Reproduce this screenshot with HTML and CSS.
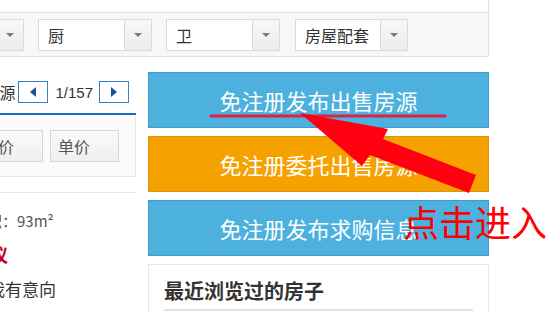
FILE: index.html
```html
<!DOCTYPE html>
<html lang="zh-CN">
<head>
    <meta charset="UTF-8">
    <meta name="viewport" content="width=device-width, initial-scale=1.0">
    <title>出售房源</title>
    <link rel="stylesheet" href="styles.css">
</head>
<body>
    <div class="page">
        <div class="filter-wrap">
            <div class="filter-bar">
                <div class="select select-first">
                    <span class="select-text">朝向</span>
                    <span class="select-btn"><i class="caret"></i></span>
                </div>
                <div class="select">
                    <span class="select-text">厨</span>
                    <span class="select-btn"><i class="caret"></i></span>
                </div>
                <div class="select">
                    <span class="select-text">卫</span>
                    <span class="select-btn"><i class="caret"></i></span>
                </div>
                <div class="select select-last">
                    <span class="select-text">房屋配套</span>
                    <span class="select-btn"><i class="caret"></i></span>
                </div>
            </div>
        </div>

        <div class="main">
            <div class="side">
                <div class="pager">
                    <span class="pager-label">出售房源</span>
                    <span class="pager-btn"><i class="tri tri-left"></i></span>
                    <span class="pager-count">1/157</span>
                    <span class="pager-btn"><i class="tri tri-right"></i></span>
                </div>

                <div class="sort">
                    <span class="sort-btn">总价</span>
                    <span class="sort-btn">单价</span>
                </div>

                <div class="listing">
                    <p class="area">面积：93m&sup2;</p>
                    <p class="price">面议</p>
                    <p class="intent">我有意向</p>
                </div>
            </div>

            <div class="actions">
                <a class="action action-blue" href="#">免注册发布出售房源</a>
                <a class="action action-orange" href="#">免注册委托出售房源</a>
                <a class="action action-blue" href="#">免注册发布求购信息</a>

                <div class="recent">
                    <h3 class="recent-title">最近浏览过的房子</h3>
                </div>
            </div>
        </div>

        <!-- hand-drawn annotation on top of the page -->
        <svg class="annot" width="550" height="312" viewBox="0 0 550 312">
            <line x1="211" y1="116" x2="445" y2="116" stroke="#dc2440" stroke-width="3" stroke-linecap="round"/>
            <polygon points="300,113 388,129 383,139 476,175 469,193 370,155 362,166" fill="#ff0010"/>
        </svg>
        <span class="annot-text">点击进入</span>
    </div>
</body>
</html>
```

FILE: styles.css
```css
body {
    margin: 0;
    font-family: "Noto Sans CJK SC", "Liberation Sans", sans-serif;
    color: #333;
    background: #fff;
}

.page {
    position: relative;
    width: 550px;
    height: 312px;
    overflow: hidden;
}

/* filter bar */
.filter-wrap {
    box-sizing: border-box;
    width: 489px;
    padding-top: 12px;
    border-right: 1px solid #e2e2e2;
}

.filter-bar {
    display: flex;
    gap: 14px;
    height: 45px;
    padding-top: 6px;
    box-sizing: border-box;
    background: #f7f7f7;
    border-top: 1px solid #e2e2e2;
    border-bottom: 1px solid #e2e2e2;
}

.select {
    box-sizing: border-box;
    display: flex;
    flex-shrink: 0;
    width: 114px;
    height: 32px;
    background: #fff;
    border: 1px solid #dadada;
}

.select-first {
    margin-left: -90px;
}

.select-last {
    width: 113px;
    margin-left: 1px;
}

.select-text {
    flex: 1;
    padding-left: 9px;
    font-size: 16px;
    line-height: 30px;
    color: #333;
}

.select-btn {
    display: flex;
    align-items: center;
    justify-content: center;
    width: 26px;
    border-left: 1px solid #dadada;
    background: linear-gradient(#f8f8f8, #ececec);
}

.caret {
    width: 0;
    height: 0;
    border-left: 4px solid transparent;
    border-right: 4px solid transparent;
    border-top: 4px solid #777;
}

/* main area */
.main {
    display: flex;
    gap: 12px;
}

.side {
    width: 136px;
    flex-shrink: 0;
    overflow: hidden;
}

.pager {
    display: flex;
    justify-content: flex-end;
    align-items: center;
    height: 22px;
    padding: 24px 7px 10px 0;
    border-bottom: 2px solid #1a6ec2;
    white-space: nowrap;
}

.pager > * {
    flex-shrink: 0;
}

.pager-label {
    font-size: 16px;
    margin-right: 3px;
}

.pager-btn {
    box-sizing: border-box;
    display: flex;
    align-items: center;
    justify-content: center;
    width: 30px;
    height: 22px;
    background: #fff;
    border: 1px solid #3a7fc6;
}

.pager-count {
    font-family: "Liberation Sans", sans-serif;
    font-size: 15px;
    margin: 0 6px 0 7px;
}

.tri {
    width: 0;
    height: 0;
    border-top: 5px solid transparent;
    border-bottom: 5px solid transparent;
}

.tri-left {
    border-right: 6px solid #1c4f9c;
}

.tri-right {
    border-left: 6px solid #1c4f9c;
}

.sort {
    display: flex;
    justify-content: flex-end;
    gap: 7px;
    height: 46px;
    padding: 15px 16px 0 0;
    background: #fbfbfb;
    border-right: 1px solid #e8e8e8;
    border-bottom: 1px solid #e8e8e8;
}

.sort-btn {
    box-sizing: border-box;
    width: 69px;
    height: 32px;
    flex-shrink: 0;
    padding-left: 7px;
    font-size: 16px;
    line-height: 30px;
    color: #555;
    background: linear-gradient(#fafafa, #efefef);
    border: 1px solid #d6d6d6;
}

.listing {
    margin-top: 15px;
    border-top: 1px solid #e8e8e8;
}

.listing p {
    margin: 0;
    white-space: nowrap;
}

.listing .area {
    margin: 18px 0 0 -28px;
    font-size: 15px;
    line-height: 20px;
    color: #555;
}

.listing .price {
    margin: 11px 0 0 -28px;
    font-size: 18px;
    line-height: 24px;
    font-weight: bold;
    color: #c8001e;
}

.listing .intent {
    margin: 11px 0 0 -12px;
    font-size: 17px;
    line-height: 24px;
    color: #333;
}

/* action buttons */
.actions {
    display: flex;
    flex-direction: column;
    gap: 8px;
    width: 341px;
    padding-top: 15px;
}

.action {
    box-sizing: border-box;
    display: block;
    height: 56px;
    font-size: 22px;
    line-height: 54px;
    text-align: center;
    text-decoration: none;
    color: #fff;
}

.action-blue {
    background: #4cb1de;
    border: 1px solid #3d9ccb;
}

.action-orange {
    background: #f5a200;
    border: 1px solid #dc9410;
}

.recent {
    height: 60px;
    border: 1px solid #dfe7ef;
}

.recent-title {
    margin: 0 15px;
    padding: 14px 0 6px;
    font-size: 20px;
    line-height: 24px;
    font-weight: bold;
    color: #333;
    border-bottom: 2px solid #e3e3e3;
}

/* annotation overlay */
.annot {
    position: absolute;
    top: 0;
    left: 0;
    pointer-events: none;
}

.annot-text {
    position: absolute;
    top: 203px;
    left: 403px;
    font-size: 36px;
    line-height: 36px;
    color: #ff0000;
    white-space: nowrap;
}
```
